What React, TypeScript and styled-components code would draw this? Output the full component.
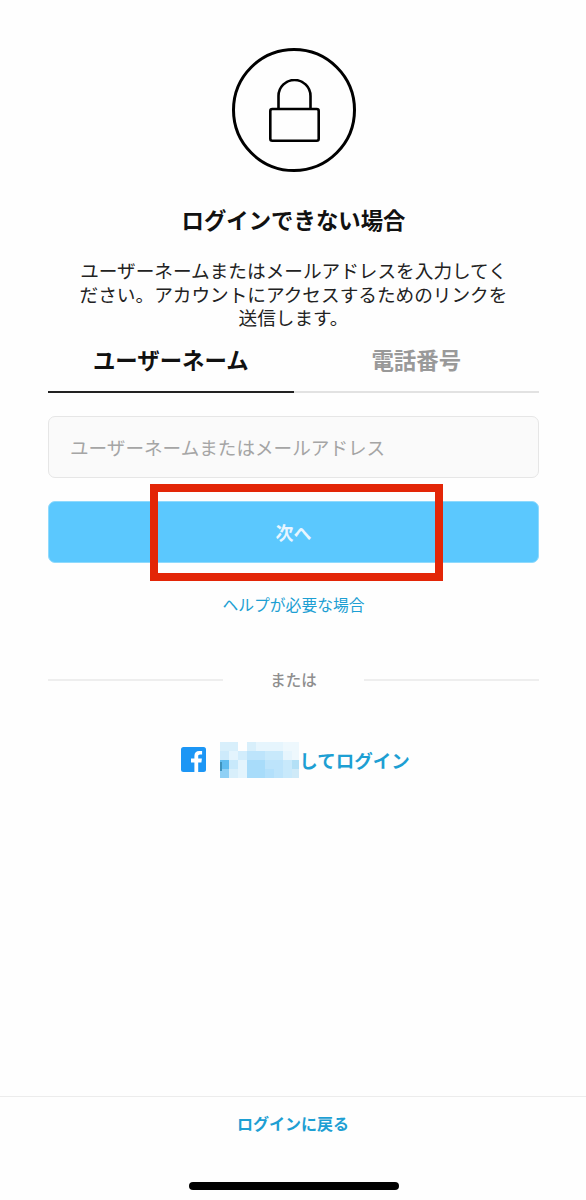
import styled, { createGlobalStyle } from "styled-components";

const GlobalStyle = createGlobalStyle`
  html, body {
    margin: 0;
    padding: 0;
    background: #fefefe;
  }
  * {
    box-sizing: border-box;
  }
`;

const Page = styled.div`
  position: relative;
  width: 586px;
  height: 1200px;
  padding-left: 1px;
  display: flex;
  flex-direction: column;
  align-items: center;
  font-family: "Noto Sans CJK JP", "Noto Sans", sans-serif;
  background: #fefefe;
  overflow: hidden;
`;

const LockCircle = styled.div`
  width: 124px;
  height: 124px;
  margin: 48px 0 0 1px;
  border: 3px solid #000;
  border-radius: 50%;
  display: flex;
  align-items: center;
  justify-content: center;
`;

const Title = styled.h1`
  margin: 30px 0 0;
  font-size: 22.4px;
  line-height: 34px;
  font-weight: 700;
  color: #111;
`;

const Description = styled.p`
  width: 436px;
  margin: 22px 0 0;
  font-size: 18.65px;
  line-height: 23.5px;
  font-weight: 400;
  text-align: center;
  color: #222;
`;

const Tabs = styled.div`
  width: 491px;
  display: flex;
  margin-top: 2px;
`;

const Tab = styled.div<{ $active?: boolean }>`
  flex: 1;
  height: 62px;
  padding-bottom: 3px;
  display: flex;
  align-items: center;
  justify-content: center;
  font-size: 22.4px;
  font-weight: 700;
  color: ${(p) => (p.$active ? "#111" : "#999")};
  border-bottom: 2px solid ${(p) => (p.$active ? "#222" : "#e2e2e2")};
`;

const Input = styled.div`
  width: 491px;
  height: 62px;
  margin-top: 23px;
  padding-left: 21px;
  display: flex;
  align-items: center;
  font-size: 18.6px;
  color: #a5a5a5;
  background: #fafafa;
  border: 1px solid #e6e6e6;
  border-radius: 7px;
`;

const NextButton = styled.div`
  width: 491px;
  height: 62px;
  margin-top: 23px;
  display: flex;
  align-items: center;
  justify-content: center;
  font-size: 18px;
  font-weight: 700;
  color: #e8f6ff;
  background: #5bc8fe;
  border: 1px solid #8fdafd;
  border-radius: 7px;
`;

const Highlight = styled.div`
  position: absolute;
  left: 150px;
  top: 484px;
  width: 293px;
  height: 97px;
  border: 8px solid #e32607;
`;

const HelpLink = styled.div`
  margin-top: 30px;
  font-size: 15.8px;
  line-height: 24px;
  color: #1d9fd3;
`;

const Divider = styled.div`
  width: 491px;
  margin-top: 50px;
  display: flex;
  align-items: center;
  justify-content: space-between;
`;

const DividerLine = styled.div`
  width: 175px;
  height: 2px;
  margin-top: 2px;
  background: #eeeeee;
`;

const DividerText = styled.span`
  font-size: 15.5px;
  line-height: 24px;
  font-weight: 500;
  color: #8e8e8e;
`;

const FacebookRow = styled.div`
  margin: 51px 0 0 4px;
  display: flex;
  align-items: center;
  color: #1d9fd3;
  font-size: 18.5px;
  line-height: 26px;
  font-weight: 700;
`;

const Mosaic = styled.svg`
  margin: 0 0 0 14px;
  display: block;
`;

const Footer = styled.div`
  position: absolute;
  left: 0;
  right: 0;
  top: 1096px;
  height: 52px;
  display: flex;
  align-items: center;
  justify-content: center;
  font-size: 16px;
  font-weight: 700;
  color: #1d9fd3;
  border-top: 1px solid #ececec;
`;

const HomeIndicator = styled.div`
  position: absolute;
  left: 189px;
  top: 1182px;
  width: 210px;
  height: 8px;
  border-radius: 4px;
  background: #000;
`;

const LockIcon = () => (
  <svg width="51" height="63" viewBox="0 0 51 63" fill="none" stroke="#000" strokeWidth="2.6">
    <path d="M9.5 30V17a16 16 0 0 1 32 0v13" />
    <rect x="1.3" y="30" width="48.4" height="31.7" rx="2" strokeLinejoin="round" />
  </svg>
);

const FacebookIcon = () => (
  <svg width="25" height="25" viewBox="0 0 25 25">
    <rect width="25" height="25" rx="2.5" fill="#1c96f5" />
    <path
      fill="#fff"
      d="M17.2 25v-9.6h3.2l.5-3.8h-3.7V9.3c0-1.1.3-1.8 1.9-1.8h2V4.1c-.4 0-1.5-.1-2.9-.1-2.9 0-4.8 1.7-4.8 5v2.6H10v3.8h3.4V25z"
    />
  </svg>
);

const mosaicCells: [number, number, string][] = [
  [0, 0, "#d8effb"], [1, 0, "#d8effb"], [3, 0, "#d8effb"], [4, 0, "#e6f5fd"], [5, 0, "#e6f5fd"], [6, 0, "#e6f5fd"], [7, 0, "#eef8fd"], [8, 0, "#eef8fd"],
  [0, 1, "#cdeafb"], [1, 1, "#e3f4fd"], [2, 1, "#d2edfc"], [3, 1, "#bde4fb"], [4, 1, "#bde4fb"], [5, 1, "#c8e9fb"], [6, 1, "#c8e9fb"], [7, 1, "#e6f5fd"], [8, 1, "#eef8fd"],
  [0, 2, "#5fbcf0"], [1, 2, "#c8e9fb"], [2, 2, "#e3f4fd"], [3, 2, "#a8dcfa"], [4, 2, "#a8dcfa"], [5, 2, "#bde4fb"], [6, 2, "#bde4fb"], [7, 2, "#c8e9fb"], [8, 2, "#b3e0f6"],
  [0, 3, "#8fd0f5"], [1, 3, "#d8effb"], [2, 3, "#e3f4fd"], [3, 3, "#a8dcfa"], [4, 3, "#a8dcfa"], [5, 3, "#b3e0fb"], [6, 3, "#bde4fb"], [7, 3, "#c8e9fb"], [8, 3, "#cfeaf8"],
  [1, 4, "#eef8fd"],
];

const MosaicBlur = () => (
  <Mosaic width="79" height="36" viewBox="0 0 79 36" shapeRendering="crispEdges">
    {mosaicCells.map(([col, row, fill]) => (
      <rect key={`${col}-${row}`} x={col * 9} y={row * 9} width="9" height="9" fill={fill} />
    ))}
    <rect x="0" y="20" width="2" height="9" fill="#3f93bd" />
  </Mosaic>
);

export default function App() {
  return (
    <Page>
      <GlobalStyle />
      <LockCircle>
        <LockIcon />
      </LockCircle>
      <Title>ログインできない場合</Title>
      <Description>
        ユーザーネームまたはメールアドレスを入力してください。アカウントにアクセスするためのリンクを送信します。
      </Description>
      <Tabs>
        <Tab $active>ユーザーネーム</Tab>
        <Tab>電話番号</Tab>
      </Tabs>
      <Input>ユーザーネームまたはメールアドレス</Input>
      <NextButton>次へ</NextButton>
      <Highlight />
      <HelpLink>ヘルプが必要な場合</HelpLink>
      <Divider>
        <DividerLine />
        <DividerText>または</DividerText>
        <DividerLine />
      </Divider>
      <FacebookRow>
        <FacebookIcon />
        <MosaicBlur />
        してログイン
      </FacebookRow>
      <Footer>ログインに戻る</Footer>
      <HomeIndicator />
    </Page>
  );
}
